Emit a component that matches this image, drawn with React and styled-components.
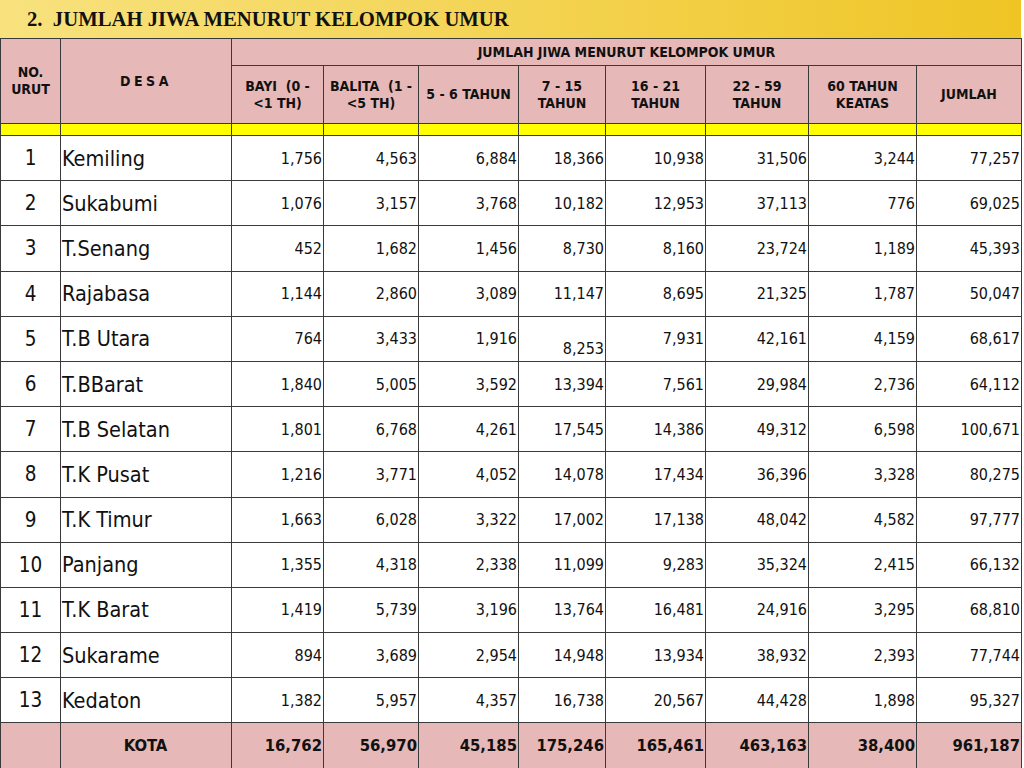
import React from 'react';
import styled, { createGlobalStyle } from 'styled-components';

const GlobalStyle = createGlobalStyle`
  html, body {
    margin: 0;
    padding: 0;
    background: #ffffff;
  }
  body {
    width: 1024px;
    height: 768px;
    overflow: hidden;
  }
`;

const Page = styled.div`
  width: 1021px;
  display: flex;
  flex-direction: column;
`;

const TitleBar = styled.div`
  height: 38px;
  display: flex;
  align-items: center;
  padding-left: 27px;
  background: linear-gradient(90deg, #f8e27e 0%, #f4d558 45%, #efc525 100%);
  font-family: 'Liberation Serif', 'Times New Roman', serif;
  font-weight: bold;
  font-size: 20.7px;
  color: #111;
  white-space: pre;
`;

const Table = styled.table`
  width: 1021px;
  table-layout: fixed;
  border-collapse: collapse;
  font-family: 'DejaVu Sans Condensed', 'DejaVu Sans', Tahoma, sans-serif;
  color: #111;

  td, th {
    border: 1px solid #3a3a3a;
    padding: 0;
    overflow: hidden;
  }
`;

const HeadCell = styled.th`
  background: #e6b8b7;
  font-size: 14px;
  font-weight: bold;
  line-height: 17px;
  text-align: center;
  vertical-align: middle;
  white-space: pre;
  letter-spacing: ${(p) => (p.$spaced ? '3.5px' : '0')};
`;

const HeadRow = styled.tr`
  height: ${(p) => p.$h}px;
`;

const StripeCell = styled.td`
  background: #ffff00;
  height: 11px;
`;

const DataRow = styled.tr`
  height: 45.2px;
`;

const NoCell = styled.td`
  text-align: center;
  font-size: 20.5px;
  vertical-align: middle;
`;

const NameCell = styled.td`
  text-align: left;
  font-size: 21.5px;
  padding-left: 1px !important;
  vertical-align: middle;
  white-space: nowrap;
`;

const NumCell = styled.td`
  text-align: right;
  font-size: 16px;
  padding-right: 1px !important;
  vertical-align: ${(p) => (p.$low ? 'bottom' : 'middle')};
  padding-bottom: ${(p) => (p.$low ? '3px' : '0')} !important;
`;

const TotalRow = styled.tr`
  height: 46px;
  background: #e6b8b7;
`;

const TotalCell = styled.td`
  font-weight: bold;
  font-size: 16.5px;
  text-align: ${(p) => (p.$center ? 'center' : 'right')};
  padding-right: 1px !important;
  vertical-align: middle;
`;

const widths = [60, 171, 92, 95, 100, 87, 100, 103, 108, 105];

const ageHeads = [
  ['BAYI  (0 -', '<1 TH)'],
  ['BALITA  (1 -', '<5 TH)'],
  ['5 - 6 TAHUN'],
  ['7 - 15', 'TAHUN'],
  ['16 - 21', 'TAHUN'],
  ['22 - 59', 'TAHUN'],
  ['60 TAHUN', 'KEATAS'],
  ['JUMLAH'],
];

const rows = [
  ['Kemiling', '1,756', '4,563', '6,884', '18,366', '10,938', '31,506', '3,244', '77,257'],
  ['Sukabumi', '1,076', '3,157', '3,768', '10,182', '12,953', '37,113', '776', '69,025'],
  ['T.Senang', '452', '1,682', '1,456', '8,730', '8,160', '23,724', '1,189', '45,393'],
  ['Rajabasa', '1,144', '2,860', '3,089', '11,147', '8,695', '21,325', '1,787', '50,047'],
  ['T.B Utara', '764', '3,433', '1,916', '8,253', '7,931', '42,161', '4,159', '68,617'],
  ['T.BBarat', '1,840', '5,005', '3,592', '13,394', '7,561', '29,984', '2,736', '64,112'],
  ['T.B Selatan', '1,801', '6,768', '4,261', '17,545', '14,386', '49,312', '6,598', '100,671'],
  ['T.K Pusat', '1,216', '3,771', '4,052', '14,078', '17,434', '36,396', '3,328', '80,275'],
  ['T.K Timur', '1,663', '6,028', '3,322', '17,002', '17,138', '48,042', '4,582', '97,777'],
  ['Panjang', '1,355', '4,318', '2,338', '11,099', '9,283', '35,324', '2,415', '66,132'],
  ['T.K Barat', '1,419', '5,739', '3,196', '13,764', '16,481', '24,916', '3,295', '68,810'],
  ['Sukarame', '894', '3,689', '2,954', '14,948', '13,934', '38,932', '2,393', '77,744'],
  ['Kedaton', '1,382', '5,957', '4,357', '16,738', '20,567', '44,428', '1,898', '95,327'],
];

const totals = ['16,762', '56,970', '45,185', '175,246', '165,461', '463,163', '38,400', '961,187'];

export default function App() {
  return (
    <>
      <GlobalStyle />
      <Page>
        <TitleBar>{'2.  JUMLAH JIWA MENURUT KELOMPOK UMUR'}</TitleBar>
        <Table>
          <colgroup>
            {widths.map((w, i) => (
              <col key={i} style={{ width: w }} />
            ))}
          </colgroup>
          <thead>
            <HeadRow $h={27}>
              <HeadCell rowSpan={2}>
                NO.
                <br />
                URUT
              </HeadCell>
              <HeadCell rowSpan={2} $spaced>
                DESA
              </HeadCell>
              <HeadCell colSpan={8}>JUMLAH JIWA MENURUT KELOMPOK UMUR</HeadCell>
            </HeadRow>
            <HeadRow $h={58}>
              {ageHeads.map((lines, i) => (
                <HeadCell key={i}>
                  {lines.map((l, j) => (
                    <React.Fragment key={j}>
                      {j > 0 && <br />}
                      {l}
                    </React.Fragment>
                  ))}
                </HeadCell>
              ))}
            </HeadRow>
            <tr>
              {widths.map((_, i) => (
                <StripeCell key={i} />
              ))}
            </tr>
          </thead>
          <tbody>
            {rows.map((r, i) => (
              <DataRow key={i}>
                <NoCell>{i + 1}</NoCell>
                <NameCell>{r[0]}</NameCell>
                {r.slice(1).map((v, j) => (
                  <NumCell key={j} $low={i === 4 && j === 3}>
                    {v}
                  </NumCell>
                ))}
              </DataRow>
            ))}
            <TotalRow>
              <TotalCell />
              <TotalCell $center>KOTA</TotalCell>
              {totals.map((v, j) => (
                <TotalCell key={j}>{v}</TotalCell>
              ))}
            </TotalRow>
          </tbody>
        </Table>
      </Page>
    </>
  );
}
